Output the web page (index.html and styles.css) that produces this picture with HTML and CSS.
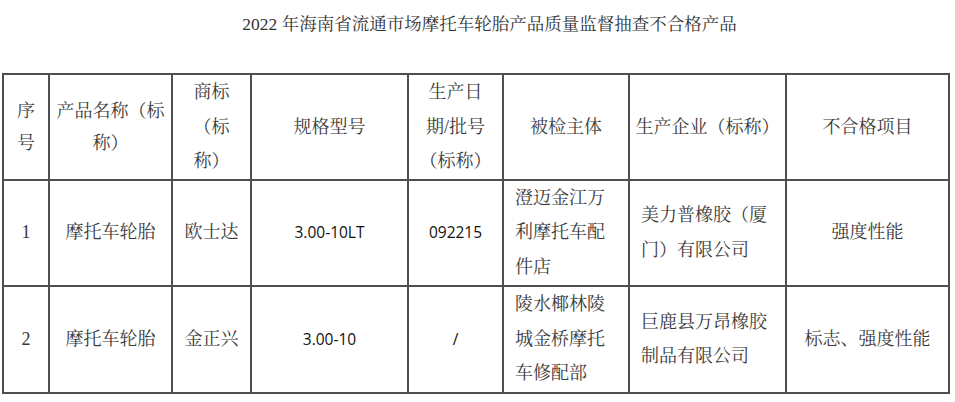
FILE: index.html
```html
<!DOCTYPE html>
<html lang="zh-CN">
<head>
<meta charset="utf-8">
<title>2022年海南省流通市场摩托车轮胎产品质量监督抽查不合格产品</title>
<link rel="stylesheet" href="styles.css">
</head>
<body>
<div class="page">
  <h1 class="title">2022 年海南省流通市场摩托车轮胎产品质量监督抽查不合格产品</h1>
  <table class="grid">
    <colgroup>
      <col class="c1"><col class="c2"><col class="c3"><col class="c4"><col class="c5"><col class="c6"><col class="c7"><col class="c8">
    </colgroup>
    <tr class="head">
      <td class="tight">序<br>号</td>
      <td class="tight">产品名称（标<br>称）</td>
      <td>商标<br>（标<br>称）</td>
      <td>规格型号</td>
      <td>生产日<br>期/批号<br>（标称）</td>
      <td>被检主体</td>
      <td>生产企业（标称）</td>
      <td>不合格项目</td>
    </tr>
    <tr class="r1">
      <td class="serif">1</td>
      <td>摩托车轮胎</td>
      <td>欧士达</td>
      <td class="num">3.00-10LT</td>
      <td class="num">092215</td>
      <td class="left">澄迈金江万<br>利摩托车配<br>件店</td>
      <td class="left">美力普橡胶（厦<br>门）有限公司</td>
      <td>强度性能</td>
    </tr>
    <tr class="r2">
      <td class="serif">2</td>
      <td>摩托车轮胎</td>
      <td>金正兴</td>
      <td class="num">3.00-10</td>
      <td class="num">/</td>
      <td class="left">陵水椰林陵<br>城金桥摩托<br>车修配部</td>
      <td class="left">巨鹿县万昂橡胶<br>制品有限公司</td>
      <td>标志、强度性能</td>
    </tr>
  </table>
</div>
</body>
</html>
```
FILE: styles.css
```css
html, body {
  margin: 0;
  padding: 0;
  background: #ffffff;
}
.page {
  font-family: "Liberation Serif", "Noto Serif CJK SC", "Noto Sans CJK SC", serif;
  color: #3a3a3a;
  padding: 12px 0 0 2px;
}
.title {
  margin: 0 0 37px 0;
  padding-left: 22px;
  font-size: 17.5px;
  font-weight: normal;
  line-height: 24px;
  text-align: center;
  color: #333333;
}
.grid {
  border-collapse: collapse;
  table-layout: fixed;
  width: 946px;
  font-size: 18px;
}
.c1 { width: 46px; }
.c2 { width: 123px; }
.c3 { width: 79px; }
.c4 { width: 157px; }
.c5 { width: 95px; }
.c6 { width: 126px; }
.c7 { width: 157px; }
.c8 { width: 163px; }
.grid td {
  border: 2px solid #4f4f4f;
  padding: 0;
  line-height: 34.5px;
  text-align: center;
  vertical-align: middle;
  white-space: nowrap;
}
.grid td.tight {
  line-height: 32px;
}
.grid td.left {
  text-align: left;
  padding-left: 11px;
}
.grid td.num {
  font-family: "Open Sans", "Liberation Sans", sans-serif;
  font-size: 15.5px;
  font-weight: 500;
  color: #111111;
}
.grid td.serif {
  font-family: "Liberation Serif", serif;
}
.head { height: 104px; }
.r1 { height: 106px; }
.r2 { height: 107px; }
```
